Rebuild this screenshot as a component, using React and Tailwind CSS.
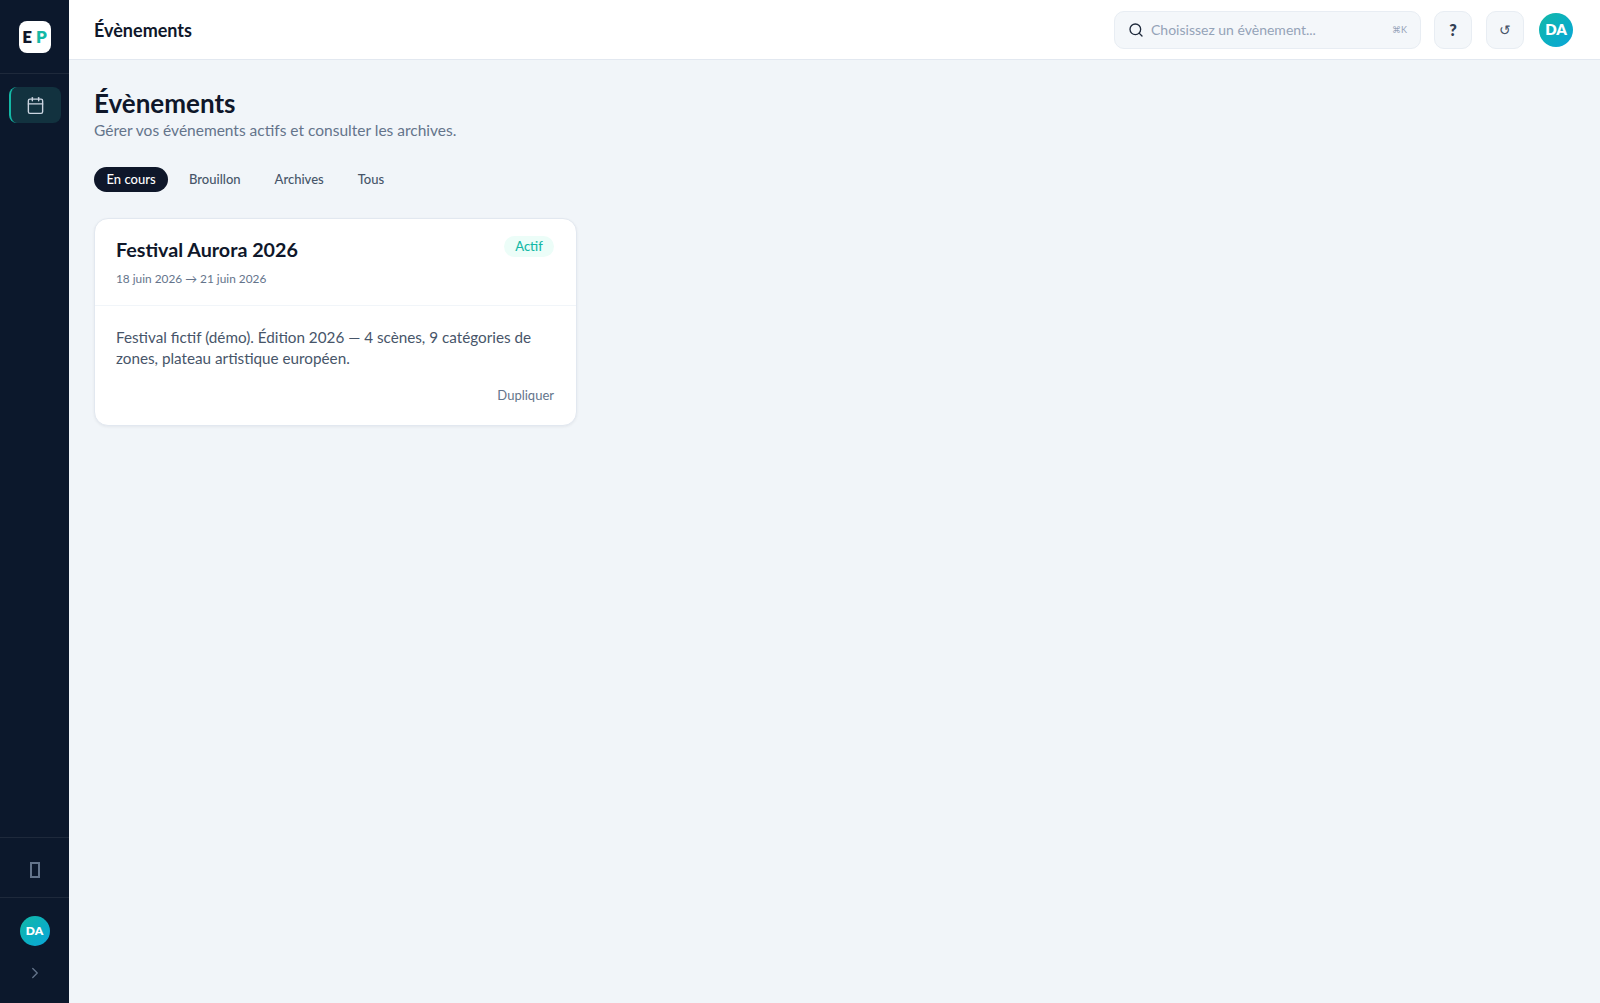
import React from "react";
import { Search, Calendar, ChevronRight } from "lucide-react";

const font = "font-['Lato','Noto_Sans',sans-serif]";

function Avatar({ size }) {
  return (
    <div className={`${size} flex items-center justify-center rounded-full bg-gradient-to-br from-[#14b8a6] to-[#0ea5d9] font-extrabold text-white`}>
      DA
    </div>
  );
}

export default function App() {
  return (
    <div className={`${font} flex h-[1003px] w-full overflow-hidden bg-[#f1f5f9]`}>
      <aside className="flex w-[69px] shrink-0 flex-col bg-[#0c182c]">
        <div className="flex h-[74px] shrink-0 items-center justify-center border-b border-[#1e293b]">
          <div className="flex h-8 w-8 items-center justify-center gap-[4px] rounded-lg bg-white text-[17px] font-extrabold">
            <span className="text-[#0f172a]">E</span>
            <span className="text-[#14b8a6]">P</span>
          </div>
        </div>
        <nav className="flex-1 px-[9px] pt-[13px]">
          <div className="flex h-9 w-[51.5px] items-center justify-center rounded-lg border-l-2 border-[#14b8a6] bg-[#12323f] text-[#cbd5e1]">
            <Calendar size={19} strokeWidth={1.75} />
          </div>
        </nav>
        <div className="flex h-[61px] shrink-0 items-center justify-center border-y border-[#1e293b] pt-[4px]">
          <div className="h-4 w-[10px] border-2 border-[#64748b]" />
        </div>
        <div className="flex h-[105px] shrink-0 flex-col items-center pt-[18px]">
          <Avatar size="h-[30px] w-[30px] text-[12px]" />
          <ChevronRight className="mt-[18px] text-[#64748b]" size={18} strokeWidth={1.75} />
        </div>
      </aside>

      <div className="flex min-w-0 flex-1 flex-col">
        <header className="flex h-[60px] shrink-0 items-center border-b border-[#e2e8f0] bg-white pl-[25px] pr-[27px]">
          <h2 className="flex-1 text-lg font-bold text-[#0f172a]">Évènements</h2>
          <div className="flex h-[38px] w-[307px] items-center rounded-[10px] border border-[#e8edf3] bg-[#f4f7fa] pl-[13px] pr-[13px]">
            <Search size={16} strokeWidth={2} className="text-[#1e293b]" />
            <span className="ml-[7px] flex-1 text-sm text-[#94a3b8]">Choisissez un évènement...</span>
            <span className="text-[9px] text-[#94a3b8]">⌘K</span>
          </div>
          <button className="ml-[13px] flex h-[38px] w-[38px] items-center justify-center rounded-[10px] border border-[#e8edf3] bg-[#f4f7fa] text-base font-extrabold text-[#334155]">?</button>
          <button className="ml-[14px] flex h-[38px] w-[38px] items-center justify-center rounded-[10px] border border-[#e8edf3] bg-[#f4f7fa] text-sm text-[#475569]">↺</button>
          <div className="ml-[15px]"><Avatar size="h-[34px] w-[34px] text-[15px]" /></div>
        </header>

        <main className="px-[25px] pt-[26px]">
          <h1 className="text-[26px] leading-[34px] font-bold text-[#0f172a]">Évènements</h1>
          <p className="-mt-[2px] text-[15.5px] leading-[24px] text-[#64748b]">Gérer vos événements actifs et consulter les archives.</p>

          <div className="mt-[25px] flex items-center gap-[8px] text-[13px] font-medium">
            <div className="flex h-[25px] items-center rounded-full bg-[#0f172a] px-[12.5px] text-white">En cours</div>
            <div className="flex h-[25px] items-center px-[13px] text-[#475569]">Brouillon</div>
            <div className="flex h-[25px] items-center px-[13px] text-[#475569]">Archives</div>
            <div className="flex h-[25px] items-center px-[13px] text-[#475569]">Tous</div>
          </div>

          <article className="mt-[26px] w-[483px] rounded-[14px] border border-[#e2e8f0] bg-white shadow-[0_1px_3px_rgba(15,23,42,0.06)]">
            <div className="flex justify-between border-b border-[#f1f5f9] pb-[16px] pl-[21px] pr-[22px] pt-[16px]">
              <div>
                <h3 className="text-[19.7px] leading-[30px] font-bold text-[#0f172a]">Festival Aurora 2026</h3>
                <p className="mt-[4px] text-[11.85px] leading-[20px] text-[#64748b]">18 juin 2026 → 21 juin 2026</p>
              </div>
              <span className="mt-[1px] flex h-[21px] w-[50px] items-center justify-center rounded-full bg-[#ecfdf8] text-[13px] font-medium text-[#14b8a6]">Actif</span>
            </div>
            <div className="pb-[20px] pl-[21px] pr-[22px] pt-[21px]">
              <p className="text-[15.25px] leading-[21px] text-[#475569]">Festival fictif (démo). Édition 2026 — 4 scènes, 9 catégories de zones, plateau artistique européen.</p>
              <div className="mt-[16px] text-right text-[13px] leading-[20px] text-[#64748b]">Dupliquer</div>
            </div>
          </article>
        </main>
      </div>
    </div>
  );
}
